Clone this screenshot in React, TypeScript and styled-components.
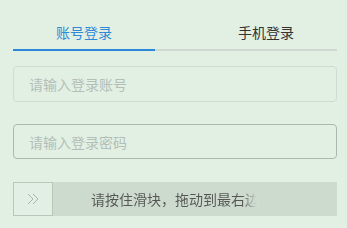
import React, { useState } from "react";
import styled, { createGlobalStyle } from "styled-components";

const GlobalStyle = createGlobalStyle`
  html, body {
    margin: 0;
    padding: 0;
    background: #e2f0e4;
    font-family: "Noto Sans CJK SC", "Liberation Sans", sans-serif;
  }
`;

const tabs = ["账号登录", "手机登录"];

const App = () => {
  const [active, setActive] = useState(0);

  return (
    <>
      <GlobalStyle />
      <LoginWrap>
        <TabBar>
          {tabs.map((t, i) => (
            <Tab key={t} $active={i === active} onClick={() => setActive(i)}>
              {t}
            </Tab>
          ))}
        </TabBar>
        <Field placeholder="请输入登录账号" />
        <Field $focus type="password" placeholder="请输入登录密码" />
        <Slider>
          <Handle>
            <svg width="14" height="12" viewBox="0 0 14 12">
              <path
                d="M2 1 L7 6 L2 11 M7 1 L12 6 L7 11"
                fill="none"
                stroke="#aab5ad"
                strokeWidth="1"
              />
            </svg>
          </Handle>
          <SliderText>请按住滑块，拖动到最右边</SliderText>
        </Slider>
      </LoginWrap>
    </>
  );
};

export default App;

const LoginWrap = styled.div`
  width: 324px;
  padding-left: 13px;
  display: flex;
  flex-direction: column;
`;

const TabBar = styled.div`
  display: flex;
  justify-content: space-between;
  height: 49px;
  border-bottom: 2px solid #cfd9d1;
`;

const Tab = styled.div<{ $active: boolean }>`
  width: 142px;
  height: 25px;
  padding-top: 24px;
  margin-bottom: -2px;
  box-sizing: content-box;
  display: flex;
  justify-content: center;
  align-items: flex-start;
  font-size: 14px;
  line-height: 16px;
  color: ${(p) => (p.$active ? "#2e8ad6" : "#333")};
  border-bottom: 2px solid ${(p) => (p.$active ? "#2b88d8" : "transparent")};
  cursor: pointer;
`;

const Field = styled.input<{ $focus?: boolean }>`
  margin-top: ${(p) => (p.$focus ? "22px" : "15px")};
  height: ${(p) => (p.$focus ? "35px" : "36px")};
  box-sizing: border-box;
  width: 100%;
  padding: 0 15px;
  border: 1px solid ${(p) => (p.$focus ? "#abb8ae" : "#cfdcd2")};
  border-radius: 4px;
  background: transparent;
  font-family: inherit;
  font-size: 14px;
  color: #333;
  outline: none;

  &::placeholder {
    color: #b3beb6;
  }
`;

const Slider = styled.div`
  margin-top: 23px;
  height: 34px;
  position: relative;
  display: flex;
  align-items: center;
  justify-content: center;
  background: #cddbce;
`;

const Handle = styled.div`
  position: absolute;
  left: 0;
  top: 0;
  width: 40px;
  height: 34px;
  box-sizing: border-box;
  border: 1px solid #b9c6bc;
  background: #e2efe4;
  display: flex;
  align-items: center;
  justify-content: center;
  cursor: grab;
`;

const SliderText = styled.span`
  font-size: 14px;
  background: linear-gradient(
    to right,
    #555 0%,
    #555 90%,
    #e4ece4 100%
  );
  -webkit-background-clip: text;
  background-clip: text;
  color: transparent;
  user-select: none;
`;
